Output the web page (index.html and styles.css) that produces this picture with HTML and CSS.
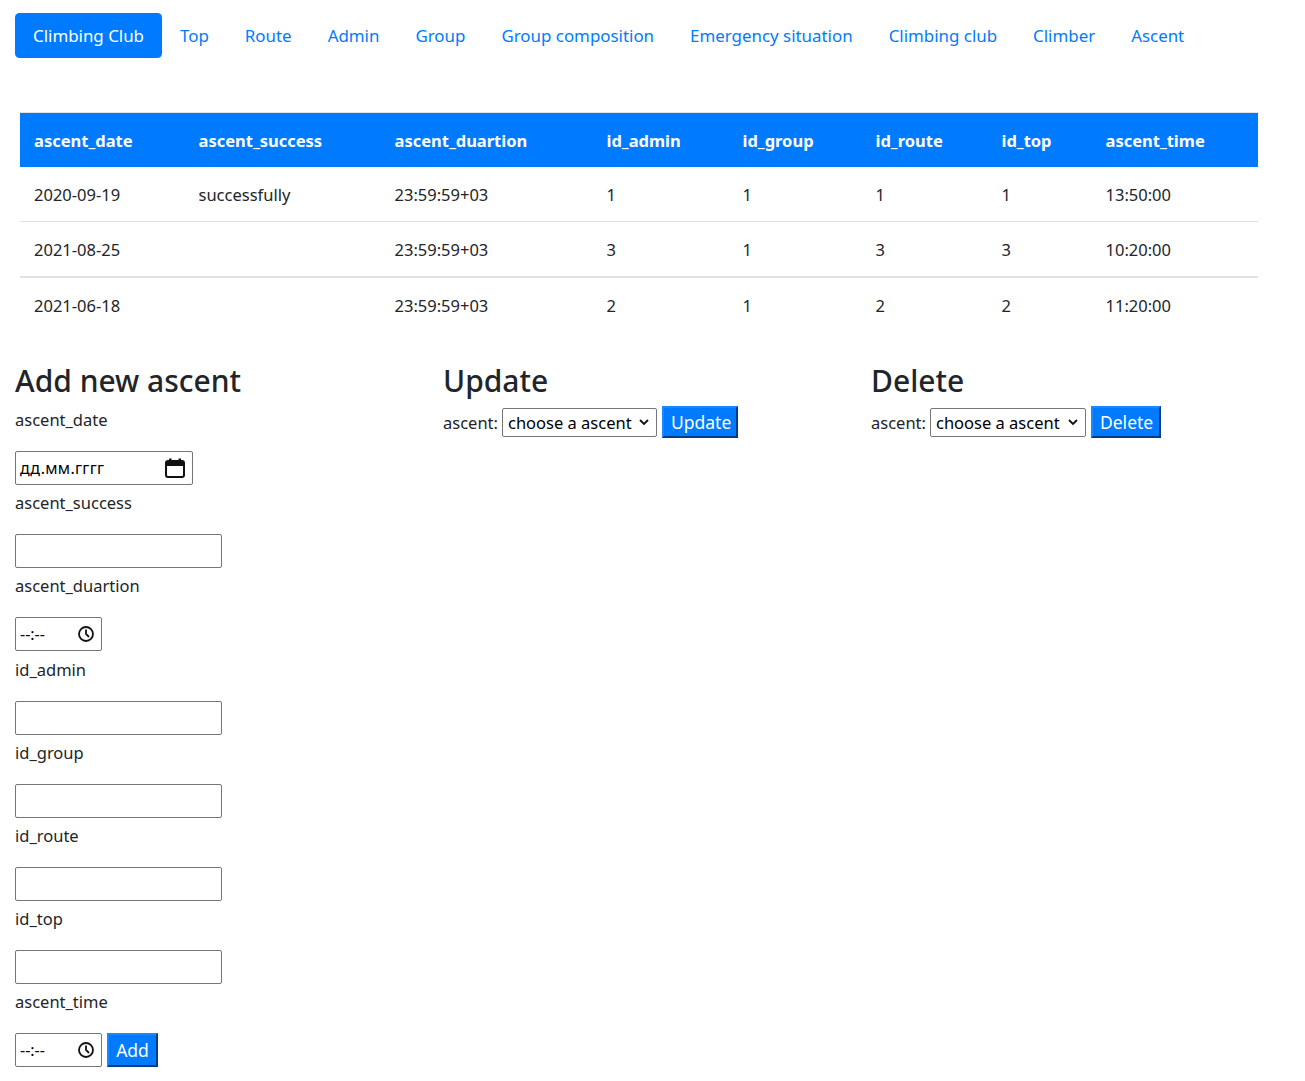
FILE: index.html
```html
<!DOCTYPE html>
<html lang="en">
<head>
<meta charset="utf-8">
<title>Ascent</title>
<link rel="stylesheet" href="styles.css">
</head>
<body>
<nav class="nav">
  <a class="nav-link active" href="#">Climbing Club</a>
  <a class="nav-link" href="#">Top</a>
  <a class="nav-link" href="#">Route</a>
  <a class="nav-link" href="#">Admin</a>
  <a class="nav-link" href="#">Group</a>
  <a class="nav-link" href="#">Group composition</a>
  <a class="nav-link" href="#">Emergency situation</a>
  <a class="nav-link" href="#">Climbing club</a>
  <a class="nav-link" href="#">Climber</a>
  <a class="nav-link" href="#">Ascent</a>
</nav>

<div class="table-wrap">
<table class="data">
  <colgroup>
    <col class="c1"><col class="c2"><col class="c3"><col class="c4"><col class="c5"><col class="c6"><col class="c7"><col class="c8">
  </colgroup>
  <thead>
    <tr><th>ascent_date</th><th>ascent_success</th><th>ascent_duartion</th><th>id_admin</th><th>id_group</th><th>id_route</th><th>id_top</th><th>ascent_time</th></tr>
  </thead>
  <tbody class="first">
    <tr><td>2020-09-19</td><td>successfully</td><td>23:59:59+03</td><td>1</td><td>1</td><td>1</td><td>1</td><td>13:50:00</td></tr>
    <tr><td>2021-08-25</td><td></td><td>23:59:59+03</td><td>3</td><td>1</td><td>3</td><td>3</td><td>10:20:00</td></tr>
  </tbody>
  <tbody class="second">
    <tr><td>2021-06-18</td><td></td><td>23:59:59+03</td><td>2</td><td>1</td><td>2</td><td>2</td><td>11:20:00</td></tr>
  </tbody>
</table>
</div>

<div class="forms">
  <section class="col">
    <h2 class="title">Add new ascent</h2>
    <label class="field-label">ascent_date</label>
    <div class="fake-input date-input"><span class="ph">дд.мм.гггг</span>
      <svg class="cal" width="22" height="22" viewBox="0 0 22 22"><rect x="2" y="4" width="18" height="16" rx="2" fill="none" stroke="#111" stroke-width="2"/><rect x="2" y="4" width="18" height="5" fill="#111"/><rect x="5" y="1.5" width="2.5" height="4" fill="#111"/><rect x="14.5" y="1.5" width="2.5" height="4" fill="#111"/></svg>
    </div>
    <label class="field-label">ascent_success</label>
    <input class="text-input" type="text">
    <label class="field-label">ascent_duartion</label>
    <div class="fake-input time-input"><span class="ph">--:--</span>
      <svg class="clock" width="18" height="18" viewBox="0 0 18 18"><circle cx="9" cy="9" r="7" fill="none" stroke="#111" stroke-width="1.8"/><path d="M9 4.5V9l3 3" fill="none" stroke="#111" stroke-width="1.8"/></svg>
    </div>
    <label class="field-label">id_admin</label>
    <input class="text-input" type="text">
    <label class="field-label">id_group</label>
    <input class="text-input" type="text">
    <label class="field-label">id_route</label>
    <input class="text-input" type="text">
    <label class="field-label">id_top</label>
    <input class="text-input" type="text">
    <label class="field-label">ascent_time</label>
    <div class="inline-row">
      <div class="fake-input time-input"><span class="ph">--:--</span>
        <svg class="clock" width="18" height="18" viewBox="0 0 18 18"><circle cx="9" cy="9" r="7" fill="none" stroke="#111" stroke-width="1.8"/><path d="M9 4.5V9l3 3" fill="none" stroke="#111" stroke-width="1.8"/></svg>
      </div>
      <button class="btn add-btn" type="button">Add</button>
    </div>
  </section>

  <section class="col">
    <h2 class="title">Update</h2>
    <div class="action-row">
      <span class="action-label">ascent:</span>
      <div class="fake-select upd-select"><span>choose a ascent</span>
        <svg width="10" height="8" viewBox="0 0 10 8"><path d="M1 2l4 4 4-4" fill="none" stroke="#111" stroke-width="1.8"/></svg>
      </div>
      <button class="btn act-btn upd-btn" type="button">Update</button>
    </div>
  </section>

  <section class="col">
    <h2 class="title">Delete</h2>
    <div class="action-row">
      <span class="action-label">ascent:</span>
      <div class="fake-select del-select"><span>choose a ascent</span>
        <svg width="10" height="8" viewBox="0 0 10 8"><path d="M1 2l4 4 4-4" fill="none" stroke="#111" stroke-width="1.8"/></svg>
      </div>
      <button class="btn act-btn del-btn" type="button">Delete</button>
    </div>
  </section>
</div>
</body>
</html>
```

FILE: styles.css
```css
* { box-sizing: border-box; }
html, body { margin: 0; padding: 0; background: #fff; }
body {
  font-family: "Noto Sans", "Open Sans", sans-serif;
  font-size: 16.5px;
  line-height: 27px;
  color: #212529;
}

/* nav */
.nav {
  display: flex;
  margin-top: 13px;
  padding-left: 15px;
}
.nav-link {
  display: block;
  padding: 9px 18px;
  font-size: 16.9px;
  line-height: 27px;
  color: #007bff;
  text-decoration: none;
  border-radius: 4.5px;
}
.nav-link.active {
  background: #007bff;
  color: #fff;
}

/* table */
.table-wrap {
  margin: 54px 0 0 20px;
  width: 1238px;
}
.data {
  width: 1238px;
  border-collapse: collapse;
  table-layout: fixed;
}
.c1 { width: 164.5px; }
.c2 { width: 196px; }
.c3 { width: 212px; }
.c4 { width: 136px; }
.c5 { width: 133px; }
.c6 { width: 126px; }
.c7 { width: 104px; }
.c8 { width: 166.5px; }
.data th {
  background: #007bff;
  color: #fff;
  font-weight: 700;
  text-align: left;
  padding: 13.5px 14px;
  line-height: 27px;
  border-top: 1px solid #dee2e6;
}
.data td {
  padding: 13.5px 14px;
  line-height: 27px;
  border-top: 1px solid #dee2e6;
  vertical-align: top;
}
.data tbody.first tr:first-child td { border-top: 0; }
.data tbody.second tr:first-child td { border-top: 2px solid #dee2e6; }

/* forms */
.forms {
  display: grid;
  grid-template-columns: 428px 428px 428px;
  padding-left: 15px;
  margin-top: 27px;
}
.col { display: flex; flex-direction: column; align-items: flex-start; }
.title {
  margin: 0 0 4px;
  font-size: 30px;
  font-weight: 500;
  line-height: 43px;
}
.field-label {
  display: block;
  line-height: 27px;
  margin: 4.2px 0 18px;
}
.title + .field-label { margin-top: 0; }
.text-input {
  display: block;
  width: 207px;
  height: 34px;
  border: 1px solid #767676;
  border-radius: 2px;
  font: inherit;
  padding: 1px 4px;
  margin: 0;
  background: #fff;
}
.fake-input {
  display: flex;
  align-items: center;
  justify-content: space-between;
  height: 34px;
  border: 1px solid #767676;
  border-radius: 2px;
  padding: 0 6px 0 4px;
  color: #000;
  background: #fff;
}
.date-input { width: 178px; }
.date-input .ph { font-size: 16px; letter-spacing: 0.3px; }
.time-input { width: 87px; height: 34px; }
.time-input .ph { font-size: 16px; }
.cal { display: block; }
.clock { display: block; }

.inline-row { display: flex; gap: 5px; }

.btn {
  background: #007bff;
  color: #fff;
  font: inherit;
  font-size: 17.5px;
  line-height: 24px;
  border: 2px outset #0063d6;
  border-top-color: #1a88ff;
  border-left-color: #1a88ff;
  border-radius: 0;
  padding: 0 7px;
  margin: 0;
}
.add-btn { width: 51px; height: 34px; }

.action-row {
  display: flex;
  align-items: center;
  height: 32px;
  margin-top: 0;
}
.action-label { margin-right: 4px; }
.fake-select {
  display: flex;
  align-items: center;
  justify-content: space-between;
  height: 29px;
  border: 1px solid #767676;
  border-radius: 2px;
  padding: 0 7px 0 5px;
  color: #000;
  background: #fff;
  margin-right: 5px;
}
.upd-select { width: 155px; }
.del-select { width: 156px; }
.upd-btn { width: 76px; height: 32px; }
.del-btn { width: 70px; height: 32px; }
```
